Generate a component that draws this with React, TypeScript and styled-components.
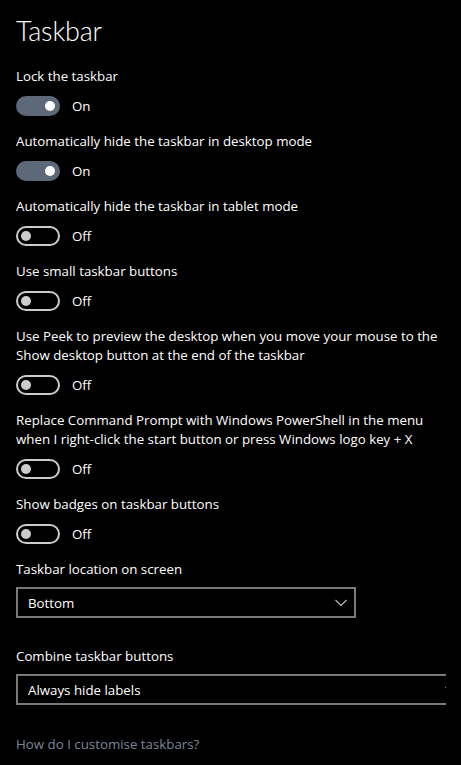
import React from "react";
import styled, { createGlobalStyle } from "styled-components";

const Global = createGlobalStyle`
  html, body { margin: 0; padding: 0; background: #000; }
  body { font-family: "Segoe UI", "Open Sans", "Liberation Sans", sans-serif; color: #fff; }
`;

const Page = styled.div`
  width: 461px;
  height: 765px;
  overflow: hidden;
  background: #000;
  padding: 0 0 0 16px;
  box-sizing: border-box;
  display: flex;
  flex-direction: column;
`;

const Title = styled.h1`
  margin: 12px 0 0 0;
  height: 38px;
  font-family: "Segoe UI Light", "Lato", "Open Sans", sans-serif;
  font-size: 27px;
  font-weight: 300;
  line-height: 38px;
  letter-spacing: -0.2px;
`;

const Setting = styled.div`
  margin-top: 17px;
  display: flex;
  flex-direction: column;
  & + & {
    margin-top: 16px;
  }
`;

const Label = styled.div`
  font-size: 13.3px;
  line-height: 19px;
  width: 440px;
  white-space: nowrap;
`;

const ToggleRow = styled.div`
  margin-top: 10px;
  display: flex;
  align-items: center;
  gap: 12px;
  height: 20px;
`;

const Track = styled.div<{ $on: boolean }>`
  width: 44px;
  height: 20px;
  box-sizing: border-box;
  border-radius: 10px;
  display: flex;
  align-items: center;
  padding: 0 3px;
  justify-content: ${(p) => (p.$on ? "flex-end" : "flex-start")};
  background: ${(p) => (p.$on ? "#5d6878" : "transparent")};
  border: 2px solid ${(p) => (p.$on ? "#5d6878" : "#cccccc")};
`;

const Knob = styled.div<{ $on: boolean }>`
  width: 10px;
  height: 10px;
  border-radius: 50%;
  background: ${(p) => (p.$on ? "#ffffff" : "#cccccc")};
`;

const State = styled.span`
  font-size: 13.3px;
  line-height: 20px;
`;

const FieldLabel = styled(Label)<{ $gap: number }>`
  margin-top: ${(p) => p.$gap}px;
`;

const SelectClip = styled.div`
  margin-top: 8px;
  width: 430px;
  overflow: hidden;
`;

const Select = styled.div<{ $w: number }>`
  width: ${(p) => p.$w}px;
  height: 31px;
  box-sizing: border-box;
  border: 2px solid #7a7a7a;
  display: flex;
  align-items: center;
  justify-content: space-between;
  padding: 0 7px 0 10px;
  font-size: 13.3px;
`;

const ChevronSvg = styled.svg`
  flex: none;
  display: block;
`;

const Chevron = () => (
  <ChevronSvg width="12" height="8" viewBox="0 0 12 8">
    <path d="M0.5 1 L6 6.5 L11.5 1" fill="none" stroke="#bdbdbd" strokeWidth="1.1" />
  </ChevronSvg>
);

const Link = styled.a`
  margin-top: 29px;
  font-size: 13.3px;
  line-height: 20px;
  color: #7b8799;
  text-decoration: none;
`;

const toggles: { label: React.ReactNode; on: boolean }[] = [
  { label: "Lock the taskbar", on: true },
  { label: "Automatically hide the taskbar in desktop mode", on: true },
  { label: "Automatically hide the taskbar in tablet mode", on: false },
  { label: "Use small taskbar buttons", on: false },
  {
    label: (
      <>
        Use Peek to preview the desktop when you move your mouse to the
        <br />
        Show desktop button at the end of the taskbar
      </>
    ),
    on: false,
  },
  {
    label: (
      <>
        Replace Command Prompt with Windows PowerShell in the menu
        <br />
        when I right-click the start button or press Windows logo key + X
      </>
    ),
    on: false,
  },
  { label: "Show badges on taskbar buttons", on: false },
];

export default function App() {
  return (
    <>
      <Global />
      <Page>
        <Title>Taskbar</Title>
        {toggles.map((t, i) => (
          <Setting key={i}>
            <Label>{t.label}</Label>
            <ToggleRow>
              <Track $on={t.on}>
                <Knob $on={t.on} />
              </Track>
              <State>{t.on ? "On" : "Off"}</State>
            </ToggleRow>
          </Setting>
        ))}
        <FieldLabel $gap={16}>Taskbar location on screen</FieldLabel>
        <SelectClip>
          <Select $w={340}>
            <span>Bottom</span>
            <Chevron />
          </Select>
        </SelectClip>
        <FieldLabel $gap={29}>Combine taskbar buttons</FieldLabel>
        <SelectClip>
          <Select $w={450}>
            <span>Always hide labels</span>
            <Chevron />
          </Select>
        </SelectClip>
        <Link href="#">How do I customise taskbars?</Link>
      </Page>
    </>
  );
}
